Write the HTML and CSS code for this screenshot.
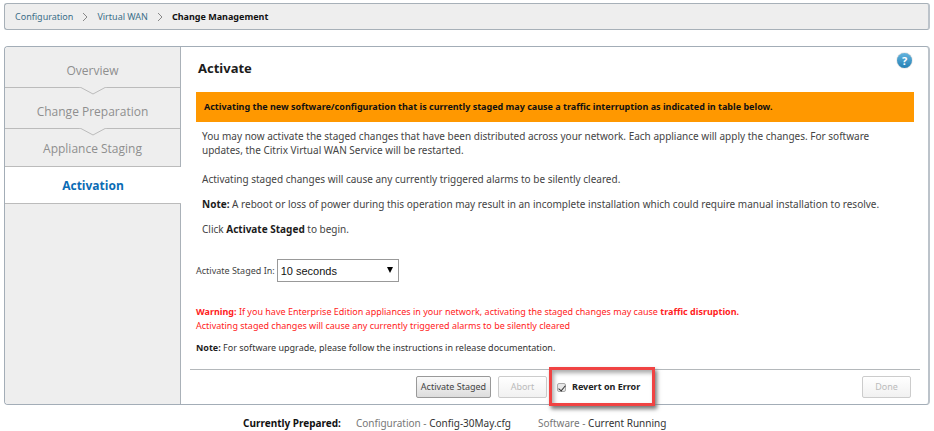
FILE: index.html
```html
<!DOCTYPE html>
<html lang="en">
<head>
<meta charset="utf-8">
<title>Change Management</title>
<link rel="stylesheet" href="styles.css">
</head>
<body>
<nav class="crumbs" aria-label="Breadcrumb">
  <a href="#">Configuration</a>
  <svg class="sep" viewBox="0 0 6 10"><path d="M1 1l4 4-4 4"/></svg>
  <a href="#">Virtual WAN</a>
  <svg class="sep" viewBox="0 0 6 10"><path d="M1 1l4 4-4 4"/></svg>
  <span class="here">Change Management</span>
</nav>
<main class="panel">
  <nav class="steps" aria-label="Steps">
    <a class="step notched" href="#">Overview<svg class="notch" viewBox="0 0 28 9"><path class="fill" d="M0 0h28L14 8z"/><path class="line" d="M0 0h1l13 7 13-7h1"/></svg></a>
    <a class="step notched" href="#">Change Preparation<svg class="notch" viewBox="0 0 28 9"><path class="fill" d="M0 0h28L14 8z"/><path class="line" d="M0 0h1l13 7 13-7h1"/></svg></a>
    <a class="step" href="#">Appliance Staging</a>
    <a class="step active" href="#">Activation</a>
  </nav>
  <section class="content">
    <header class="head">
      <h1>Activate</h1>
      <a class="help" href="#" aria-label="Help">?</a>
    </header>
    <p class="alert">Activating the new software/configuration that is currently staged may cause a traffic interruption as indicated in table below.</p>
    <div class="intro">
      <p class="first">You may now activate the staged changes that have been distributed across your network. Each appliance will apply the changes. For software updates, the Citrix Virtual WAN Service will be restarted.</p>
      <p>Activating staged changes will cause any currently triggered alarms to be silently cleared.</p>
      <p><b>Note:</b> A reboot or loss of power during this operation may result in an incomplete installation which could require manual installation to resolve.</p>
      <p>Click <b>Activate Staged</b> to begin.</p>
    </div>
    <div class="delay">
      <label for="delay">Activate Staged In:</label>
      <span class="picker">
        <select id="delay"><option>10 seconds</option></select>
        <svg class="caret" viewBox="0 0 6 6"><path d="M0 0h6L3 6z"/></svg>
      </span>
    </div>
    <div class="notes">
      <p class="warning"><b>Warning:</b> If you have Enterprise Edition appliances in your network, activating the staged changes may cause <b>traffic disruption.</b><br>Activating staged changes will cause any currently triggered alarms to be silently cleared</p>
      <p><b>Note:</b> For software upgrade, please follow the instructions in release documentation.</p>
    </div>
    <footer class="actions">
      <button class="primary" type="button">Activate Staged</button>
      <button class="small" type="button" disabled>Abort</button>
      <label class="revert"><input type="checkbox" checked>Revert on Error</label>
      <button class="small done" type="button" disabled>Done</button>
    </footer>
  </section>
</main>
<div class="status">
  <b>Currently Prepared:</b>
  <span>Configuration - <em>Config-30May.cfg</em></span>
  <span class="soft">Software - <em>Current Running</em></span>
</div>
</body>
</html>
```
FILE: styles.css
```css
* { box-sizing: border-box; }
body {
  margin: 0;
  padding: 3px 4px 0;
  background: #fff;
  color: #444;
  font: 9px/14px "Noto Sans", "Open Sans", sans-serif;
}
p, h1 { margin: 0; }
a { text-decoration: none; }
b { color: #1c1c1c; font-weight: 700; }
.crumbs {
  display: flex;
  align-items: center;
  gap: 9px;
  height: 27px;
  padding: 0 10px;
  border: 1px solid #a7b0b8;
  border-right: 2px solid #bcc3ca;
  border-radius: 3px;
  background: #eee;
}
.crumbs a { color: #3c6f89; }
.sep { width: 6px; height: 10px; fill: none; stroke: #888; stroke-width: 1; }
.here { font-weight: 700; color: #111; }
.panel {
  display: flex;
  margin-top: 16px;
  border: 1px solid #a3adb7;
  border-right: 2px solid #bcc3ca;
  border-radius: 4px;
  background: #fff;
}
.steps {
  flex: 0 0 176px;
  border-right: 1px solid #aab1b8;
  border-radius: 3px 0 0 3px;
  background: #eee;
}
.step {
  position: relative;
  display: flex;
  align-items: center;
  justify-content: center;
  height: 38px;
  padding-top: 2px;
  border-bottom: 1px solid #bbb;
  color: #8f8f8f;
  font-family: "Open Sans", "Noto Sans", sans-serif;
  font-size: 12px;
}
.notched { height: 41px; padding-top: 7px; }
.notch { position: absolute; top: 100%; left: 50%; width: 28px; height: 9px; margin-left: -14px; z-index: 1; }
.notch .fill { fill: #eee; }
.notch .line { fill: none; stroke: #bbb; }
.step.active {
  height: 37px;
  margin-right: -1px;
  background: #fff;
  color: #0a6bb5;
  font-weight: 700;
}
.content { flex: 1; min-width: 0; padding: 0 8px 0 9px; }
.head { display: flex; justify-content: space-between; padding: 6px 8px 0; height: 45px; }
.head h1 { padding-top: 6px; font-size: 13px; line-height: 18px; color: #1c1c1c; }
.help {
  width: 15px;
  height: 15px;
  border-radius: 50%;
  background: linear-gradient(#63b4de, #2480b5);
  box-shadow: 0 0 1px #555;
  color: #fff;
  font-weight: 700;
  font-size: 11px;
  line-height: 15px;
  text-align: center;
}
.alert { margin: 0 6px; padding: 8px; background: #ff9800; color: #111; font-weight: 700; }
.intro { padding: 7px 12px 0; font-size: 10px; }
.intro p { margin-bottom: 11px; }
.intro .first { margin-bottom: 15px; }
.delay { display: flex; align-items: center; gap: 2px; margin: 23px 6px 0; }
.picker { position: relative; }
.picker select {
  display: block;
  appearance: none;
  width: 122px;
  height: 23px;
  padding: 0 3px;
  border: 1px solid #999;
  border-radius: 0;
  background: #fff;
  color: #111;
  font: 11px "Liberation Sans", sans-serif;
}
.caret { position: absolute; top: 8px; right: 6px; width: 6px; height: 6px; fill: #000; }
.notes { margin: 23px 6px 0; color: #333; }
.notes .warning, .warning b { color: #f22; }
.notes .warning { margin-bottom: 8px; }
.actions {
  display: flex;
  align-items: center;
  gap: 7px;
  margin-top: 14px;
  padding: 0 9px 0 226px;
  height: 35px;
  border-top: 1px solid #b4b8bb;
}
button {
  height: 22px;
  padding: 0;
  border: 1px solid #999;
  border-radius: 2px;
  background: linear-gradient(#fafafa, #ddd);
  color: #444;
  font: inherit;
}
.primary { width: 75px; }
.small { width: 49px; }
button:disabled { border-color: #ccc; background: linear-gradient(#fff, #f1f1f1); color: #bbb; }
.revert {
  position: relative;
  display: flex;
  align-items: center;
  gap: 6px;
  margin-left: 3px;
  color: #222;
  font-weight: 700;
}
.revert::after {
  content: "";
  position: absolute;
  inset: -13px -15px -12px -8px;
  border: 3px solid #f04343;
  box-shadow: 2px 3px 4px #777, inset 2px 3px 4px #aaa;
  pointer-events: none;
}
.revert input {
  appearance: none;
  position: relative;
  width: 9px;
  height: 9px;
  margin: 0;
  border: 1px solid #aaa;
  border-radius: 2px;
  background: #e8e8e8;
}
.revert input:checked::after {
  content: "";
  position: absolute;
  top: 0;
  left: 2px;
  width: 3px;
  height: 6px;
  border: solid #333;
  border-width: 0 1px 1px 0;
  transform: rotate(40deg);
}
.done { margin-left: auto; }
.status { display: flex; gap: 15px; padding: 11px 0 0 239px; font-size: 10px; color: #777; white-space: nowrap; }
.status b { color: #111; }
.status em { font-style: normal; color: #333; }
.soft { margin-left: 12px; }
```
